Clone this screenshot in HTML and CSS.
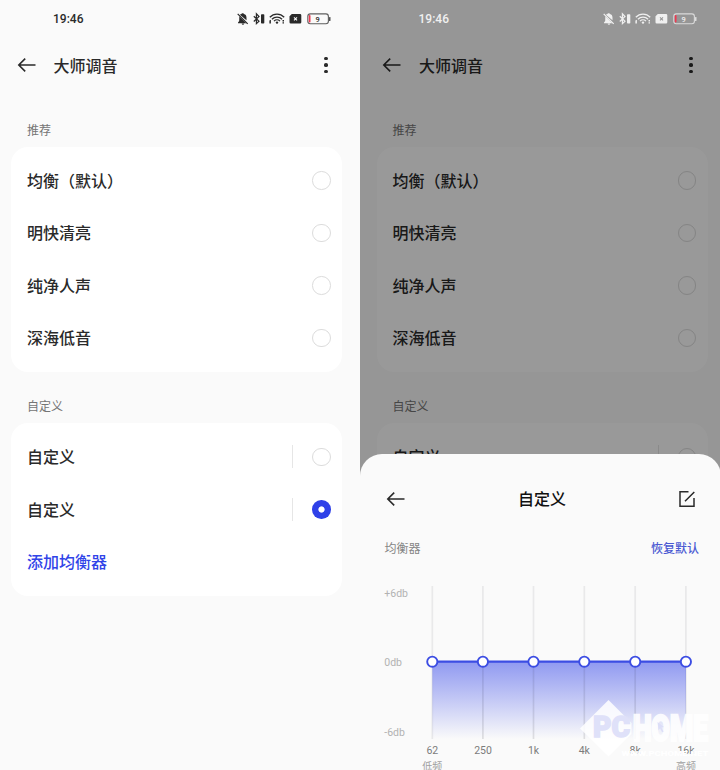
FILE: index.html
```html
<!DOCTYPE html>
<html lang="zh-CN">
<head>
<meta charset="utf-8">
<title>大师调音</title>
<link rel="stylesheet" href="styles.css">
</head>
<body>
<svg class="defs" width="0" height="0">
  <symbol id="status" viewBox="0 0 96 14">
    <g fill="currentColor">
      <path d="M7 1.2a.9.9 0 0 1 .9.9c1.900.5 2.600 1.900 2.600 3.600v2.600L3.900 2.700c.5-.4 1-.6 1.500-.7 0-.5.600-.800 1.600-.800zM3.300 4.200l7 7H2v-.8l1.200-1.300z"/>
      <path d="M5.700 11.600h2.500a1.250 1.250 0 0 1-2.500 0z"/>
      <rect x="25" y="2.200" width="3.300" height="9.300" rx=".8"/>
      <path d="M55.800 2H64a1.300 1.300 0 0 1 1.300 1.300v6.900a1.300 1.300 0 0 1-1.300 1.300H54.800a1.300 1.300 0 0 1-1.300-1.300V4.300z"/>
      <circle cx="41" cy="10.600" r="1.200"/>
      <path d="M33.400 8.600l1.500-.8v3.800h-1.500zM46.500 8h1.500v1.400h-1.500zM46.500 10.200h1.500v1.400h-1.500z"/>
      <rect x="93.200" y="5" width="1.200" height="4" rx=".6"/>
    </g>
    <g fill="none" stroke="currentColor" stroke-width="1.200">
      <path d="M1.700 1.800l10 10"/>
      <path d="M17.800 4.200l5.200 5-2.600 2.500V1.800L23 4.500l-5.200 5"/>
      <path d="M33.800 5.200c4-4.200 10.400-4.200 14.400 0M35.900 7.200c2.900-2.900 7.300-2.900 10.200 0M38 9.100c1.700-1.700 4.300-1.700 6 0" stroke-width="1.300"/>
      <rect x="71.800" y="1.900" width="20.600" height="9.800" rx="2.500" stroke-width="1.100" stroke-opacity=".75"/>
    </g>
    <path class="sim-x" d="M58 5.300l3 3M61 5.300l-3 3" fill="none" stroke-width="1.100"/>
    <rect x="72.800" y="3" width="1.700" height="7.600" rx=".8" fill="#ee3850"/>
    <text x="81.600" y="9.600" text-anchor="middle" class="battery" fill="currentColor">9</text>
  </symbol>
  <symbol id="back" viewBox="0 0 20 16">
    <path d="M18.500 8H2M8.200 1.600L1.800 8l6.400 6.400" fill="none" stroke="currentColor" stroke-width="1.600"/>
  </symbol>
</svg>

<main class="board">
  <section class="screen">
    <header class="status"><span>19:46</span><svg class="status-icons"><use href="#status"/></svg></header>
    <nav class="nav"><svg class="back"><use href="#back"/></svg><h1>大师调音</h1><span class="more"><i></i><i></i><i></i></span></nav>
    <h2 class="label first">推荐</h2>
    <ul class="card">
      <li><span class="name">均衡（默认）</span><b class="radio"></b></li>
      <li><span class="name">明快清亮</span><b class="radio"></b></li>
      <li><span class="name">纯净人声</span><b class="radio"></b></li>
      <li><span class="name">深海低音</span><b class="radio"></b></li>
    </ul>
    <h2 class="label">自定义</h2>
    <ul class="card">
      <li><span class="name">自定义</span><span class="side"><b class="radio"></b></span></li>
      <li><span class="name">自定义</span><span class="side"><b class="radio on"></b></span></li>
      <li class="link"><span class="name">添加均衡器</span></li>
    </ul>
  </section>

  <section class="screen dimmed">
    <header class="status"><span>19:46</span><svg class="status-icons"><use href="#status"/></svg></header>
    <nav class="nav"><svg class="back"><use href="#back"/></svg><h1>大师调音</h1><span class="more"><i></i><i></i><i></i></span></nav>
    <h2 class="label first">推荐</h2>
    <ul class="card">
      <li><span class="name">均衡（默认）</span><b class="radio"></b></li>
      <li><span class="name">明快清亮</span><b class="radio"></b></li>
      <li><span class="name">纯净人声</span><b class="radio"></b></li>
      <li><span class="name">深海低音</span><b class="radio"></b></li>
    </ul>
    <h2 class="label">自定义</h2>
    <ul class="card">
      <li><span class="name">自定义</span><span class="side"><b class="radio"></b></span></li>
    </ul>
    <div class="scrim"></div>
    <div class="sheet">
      <div class="sheet-head">
        <svg class="back"><use href="#back"/></svg>
        <h3>自定义</h3>
        <svg class="edit" viewBox="0 0 18 18"><path d="M10.500 1.700H2v14.600h14V8M7 11.300L16.300 2" fill="none" stroke="currentColor" stroke-width="1.500"/></svg>
      </div>
      <div class="sheet-sub"><span>均衡器</span><a>恢复默认</a></div>
      <svg class="chart" viewBox="0 0 360 200">
        <defs>
          <linearGradient id="fill" x1="0" y1="0" x2="0" y2="1">
            <stop offset="0" stop-color="#2f41e8" stop-opacity=".52"/>
            <stop offset=".45" stop-color="#2f41e8" stop-opacity=".29"/>
            <stop offset="1" stop-color="#2f41e8" stop-opacity="0"/>
          </linearGradient>
        </defs>
        <path d="M72.300 16v153M122.900 16v153M173.500 16v153M224.300 16v153M275.200 16v153M325.900 16v153" stroke="#e9e9ea" stroke-width="1.700"/>
        <rect x="72.300" y="92" width="253.700" height="77" fill="url(#fill)"/>
        <path d="M122.900 92v77M173.500 92v77M224.300 92v77M275.200 92v77" stroke="#777" stroke-opacity=".08" stroke-width="1.500"/>
        <path d="M72 91.700h254" stroke="#3c4de3" stroke-width="2.200"/>
        <g fill="#fff" stroke="#3c4de3" stroke-width="1.900">
          <circle cx="72.300" cy="91.700" r="5.100"/><circle cx="122.900" cy="91.700" r="5.100"/><circle cx="173.500" cy="91.700" r="5.100"/>
          <circle cx="224.300" cy="91.700" r="5.100"/><circle cx="275.200" cy="91.700" r="5.100"/><circle cx="325.900" cy="91.700" r="5.100"/>
        </g>
        <g class="db"><text x="24.300" y="27">+6db</text><text x="24.300" y="96.300">0db</text><text x="24.300" y="165.800">-6db</text></g>
        <g class="hz"><text x="72.300" y="183.600">62</text><text x="123" y="183.600">250</text><text x="173.500" y="183.600">1k</text><text x="224.300" y="183.600">4k</text><text x="275.200" y="183.600">8k</text><text x="326" y="183.600">16k</text></g>
        <g class="ends"><text x="72.300" y="200">低频</text><text x="326" y="200">高频</text></g>
      </svg>
      <svg class="watermark" viewBox="0 0 140 64">
        <path d="M0 32.500L28.500 4l23 23v11L28.500 60.500z" fill="#fff" fill-opacity=".85"/>
        <text x="13" y="40.700" textLength="37" lengthAdjust="spacingAndGlyphs" class="pc">PC</text>
        <text x="53" y="45" textLength="75" lengthAdjust="spacingAndGlyphs" class="home">HOME</text>
        <path d="M77.500 26l6.500 5-2.600.5 2.200 4-1.500.7-2-3.900-1.600 2z" fill="#dcdef8"/>
        <text x="41.500" y="60" textLength="87" lengthAdjust="spacingAndGlyphs" class="site">WWW.PCHOME.NET</text>
      </svg>
    </div>
  </section>
</main>
</body>
</html>
```

FILE: styles.css
```css
* { box-sizing: border-box; margin: 0; padding: 0; }
body {
  width: 720px;
  height: 770px;
  overflow: hidden;
  background: #fafafa;
  color: #2a2a2a;
  font-family: "Noto Sans CJK SC", sans-serif;
}
.defs { display: block; height: 0; }
.board { display: grid; grid-template-columns: 360px 360px; height: 770px; }
.screen { position: relative; overflow: hidden; height: 770px; background: #fafafa; --sim: #fafafa; }
.dimmed { padding-left: 5.5px; --sim: #969696; }

.status {
  display: flex;
  align-items: center;
  height: 38px;
  width: 354px;
  padding: 0 22px 0 53px;
  justify-content: space-between;
  font: 500 12px Roboto, sans-serif;
}
.status-icons { width: 96px; height: 14px; }
.sim-x { stroke: var(--sim); }
.battery { font: 500 7.5px Roboto, sans-serif; }
.dimmed .status { position: relative; z-index: 2; color: #f0f0f0; }

.nav { display: flex; align-items: center; height: 54px; width: 354px; padding: 0 25px 0 16.500px; }
.back { width: 20px; height: 16px; }
.nav h1 { flex: 1; margin-left: 17px; padding-bottom: 1px; font-size: 16px; font-weight: 500; line-height: 24px; }
.more { display: grid; gap: 2.700px; width: 6.500px; justify-items: center; }
.more i { width: 3.700px; height: 3.700px; border-radius: 50%; background: currentColor; }

.label { padding: 25.500px 27px 9px; font-size: 12px; line-height: 17px; font-weight: 400; color: #757575; }
.label.first { padding: 29px 27px 8.500px; }

.card { list-style: none; width: 331px; margin-left: 11px; padding: 7.500px 11.500px 7.500px 16px; border-radius: 17px; background: #fff; }
.card li { display: flex; align-items: center; justify-content: space-between; height: 52.500px; font-size: 16px; font-weight: 500; }
.name { padding-bottom: 1px; }
.card .link { color: #3044e8; }
.radio { width: 18.500px; height: 18.500px; border: 1.500px solid #dcdcdc; border-radius: 50%; }
.radio.on { border: none; background: radial-gradient(circle, #fff 2.700px, #2f41e8 3.500px); }
.side { display: flex; align-items: center; height: 23px; padding-left: 19px; border-left: 1.500px solid #e6e6e6; }

.scrim { position: absolute; inset: 0; background: rgba(0, 0, 0, .4); }
.sheet {
  position: absolute;
  left: 0;
  top: 454px;
  width: 361px;
  height: 316px;
  border-radius: 22px 22px 0 0;
  background: #fafafa;
  overflow: hidden;
}
.sheet-head { display: flex; align-items: center; justify-content: space-between; height: 44px; margin-top: 22.500px; padding: 0 25px 0 26px; }
.sheet-head h3 { font-size: 16px; font-weight: 500; color: #111; padding-bottom: 2px; }
.edit { width: 18px; height: 18px; }
.sheet-sub { display: flex; justify-content: space-between; padding: 0 22px 0 24.500px; margin-top: 18.500px; font-size: 12px; line-height: 17px; color: #858585; }
.sheet-sub a { color: #4a59d2; font-weight: 500; }
.chart { display: block; width: 360px; height: 200px; margin-top: 14px; }
.db { font: 10.500px Roboto, sans-serif; fill: #b2b2b2; }
.hz { font: 10.500px Roboto, sans-serif; fill: #7c7c7c; text-anchor: middle; }
.ends { font-size: 10px; fill: #a0a0a0; text-anchor: middle; }
.watermark { position: absolute; left: 220px; top: 242px; width: 140px; height: 64px; }
.pc, .home, .site { font-family: Roboto, sans-serif; font-weight: 900; }
.pc { font-size: 29px; fill: #dfe1f9; stroke: #dfe1f9; stroke-width: 1.500px; }
.home { font-size: 36px; fill: #fff; stroke: #fff; stroke-width: 2.500px; opacity: .88; }
.site { font-size: 7px; fill: #fff; }
```
